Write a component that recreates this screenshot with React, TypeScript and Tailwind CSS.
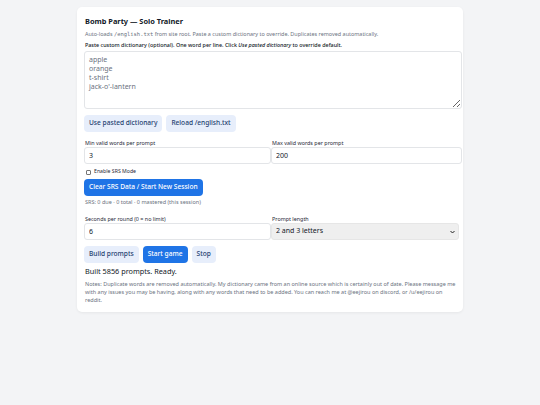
import { useState } from "react";

const font = { fontFamily: '"Noto Sans", "DejaVu Sans", sans-serif' };

export default function App() {
  const [dict, setDict] = useState("apple\norange\nt-shirt\njack-o'-lantern");
  const [minWords, setMinWords] = useState("3");
  const [maxWords, setMaxWords] = useState("200");
  const [seconds, setSeconds] = useState("6");
  const [srs, setSrs] = useState(false);

  const lightBtn =
    "h-[17px] rounded-[4px] bg-[#e7eefb] px-[5px] text-[6.6px] font-medium leading-none text-[#24416f]";
  const blueBtn =
    "h-[17px] rounded-[4px] bg-[#1f74e6] px-[5px] text-[6.6px] font-medium leading-none text-white";
  const inputCls =
    "block h-[17px] w-full rounded-[3px] border border-[#e3e5e8] bg-white px-[4px] text-[7px] text-[#111827] outline-none";
  const label = "text-[5.4px] leading-[8px] text-[#1f2937]";

  return (
    <div className="min-h-[405px] bg-[#f3f4f6] pt-[7px]" style={font}>
      <div className="mx-auto w-[386px] rounded-[5px] bg-white pb-[8px] pl-[7px] pr-[1px] pt-[8px] shadow-[0_1px_3px_rgba(0,0,0,0.06)]">
        <div className="pl-[1px] pr-[7px]">
          <h1 className="text-[7.4px] font-bold leading-[12px] text-[#111827]">
            Bomb Party — Solo Trainer
          </h1>
          <p className="mt-[3px] text-[5.45px] leading-[8px] text-[#6b7280]">
            Auto-loads{" "}
            <code className="text-[5.45px]" style={{ fontFamily: '"DejaVu Sans Mono", monospace' }}>
              /english.txt
            </code>{" "}
            from site root. Paste a custom dictionary to override. Duplicates removed automatically.
          </p>
          <p className="mt-[3px] text-[5.4px] font-medium leading-[8px] text-[#111827]">
            Paste custom dictionary (optional). One word per line. Click <em>Use pasted dictionary</em> to
            override default.
          </p>
        </div>

        <textarea
          value={dict}
          onChange={(e) => setDict(e.target.value)}
          className="mt-[2px] block h-[58px] w-full resize-y rounded-[3px] border border-[#e3e5e8] px-[4px] py-[3px] text-[7px] leading-[9px] text-[#6b7280] outline-none"
        />

        <div className="mt-[6px] flex gap-[4px]">
          <button className={lightBtn}>Use pasted dictionary</button>
          <button className={lightBtn}>Reload /english.txt</button>
        </div>

        <div className="mt-[7px] grid grid-cols-[187px_1fr]">
          <div className="flex flex-col">
            <span className={label + " pl-[1px]"}>Min valid words per prompt</span>
            <input value={minWords} onChange={(e) => setMinWords(e.target.value)} className={inputCls} />
          </div>
          <div className="flex flex-col">
            <span className={label + " pl-[1px]"}>Max valid words per prompt</span>
            <input value={maxWords} onChange={(e) => setMaxWords(e.target.value)} className={inputCls} />
          </div>
        </div>

        <label className="mt-[4px] flex h-[8px] items-center gap-[3px] pl-[2px]">
          <input
            type="checkbox"
            checked={srs}
            onChange={(e) => setSrs(e.target.checked)}
            className="m-0 h-[5px] w-[5px] appearance-none rounded-[1px] border border-[#767676] bg-white checked:bg-[#1f74e6]"
          />
          <span className="text-[5.2px] text-[#1f2937]">Enable SRS Mode</span>
        </label>

        <div className="mt-[3px] flex">
          <button className={blueBtn}>Clear SRS Data / Start New Session</button>
        </div>
        <p className="mt-[2px] pl-[1px] text-[5.5px] leading-[8px] text-[#6b7280]">
          SRS: 0 due · 0 total · 0 mastered (this session)
        </p>

        <div className="mt-[9px] grid grid-cols-[187px_1fr]">
          <div className="flex flex-col">
            <span className={label + " pl-[1px]"}>Seconds per round (0 = no limit)</span>
            <input value={seconds} onChange={(e) => setSeconds(e.target.value)} className={inputCls} />
          </div>
          <div className="flex flex-col pr-[3px]">
            <span className={label + " pl-[1px]"}>Prompt length</span>
            <div className="relative">
              <select className="block h-[17px] w-full appearance-none rounded-[3px] border border-[#e6e6e6] bg-[#efefef] px-[4px] text-[7px] text-[#111827] outline-none">
                <option>2 and 3 letters</option>
                <option>2 letters</option>
                <option>3 letters</option>
              </select>
              <svg
                viewBox="0 0 10 6"
                className="pointer-events-none absolute right-[4px] top-1/2 h-[3px] w-[5px] -translate-y-1/2"
              >
                <path d="M1 1l4 4 4-4" fill="none" stroke="#222" strokeWidth="2" />
              </svg>
            </div>
          </div>
        </div>

        <div className="mt-[6px] flex gap-[4px]">
          <button className={lightBtn}>Build prompts</button>
          <button className={blueBtn}>Start game</button>
          <button className={lightBtn}>Stop</button>
        </div>

        <div className="pl-[1px] pr-[5px]">
          <p className="mt-[2px] text-[7.3px] leading-[12px] text-[#111827]">Built 5856 prompts. Ready.</p>
          <p className="mt-[3px] text-[5.5px] leading-[8px] text-[#6b7280]">
            Notes: Duplicate words are removed automatically. My dictionary came from an online source which is
            certainly out of date. Please message me with any issues you may be having, along with any words that
            need to be added. You can reach me at @eejirou on discord, or /u/eejirou on reddit.
          </p>
        </div>
      </div>
    </div>
  );
}
